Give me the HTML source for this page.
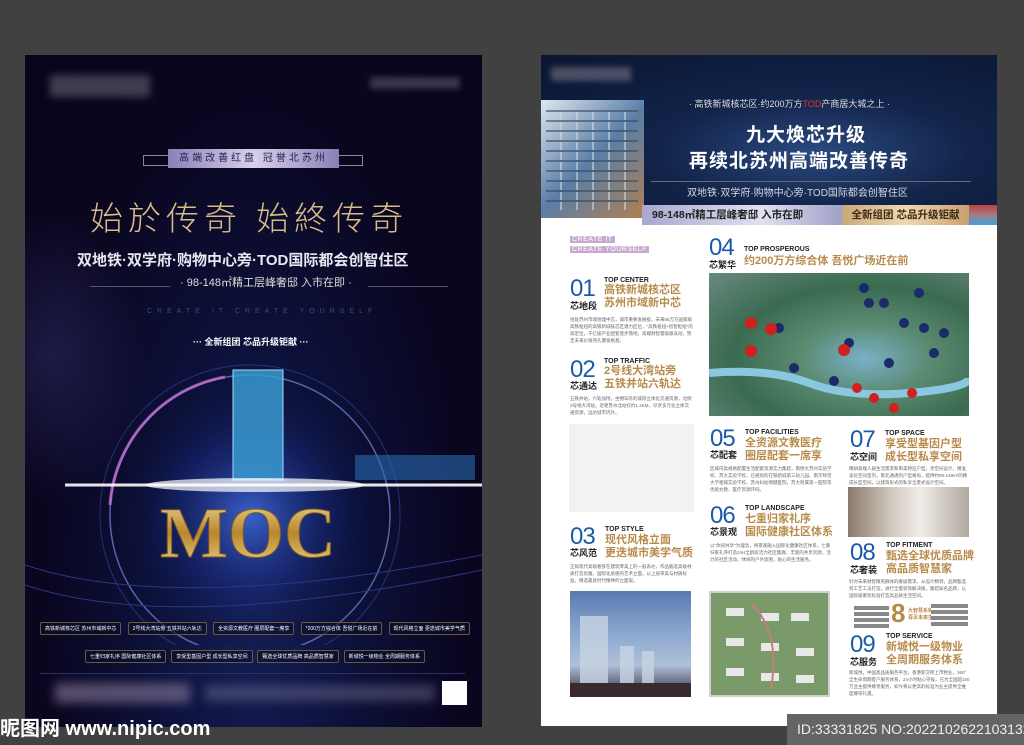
<!DOCTYPE html>
<html><head><meta charset="utf-8"><style>
*{margin:0;padding:0;box-sizing:border-box}
body{width:1024px;height:745px;background:#414141;position:relative;overflow:hidden;font-family:"Liberation Sans","Noto Sans CJK SC",sans-serif}
.a{position:absolute;white-space:nowrap}
.L{left:25px;top:55px;width:457px;height:672px;background:radial-gradient(ellipse at 50% 80%,#16205a 0%,#0c1038 35%,#0a0620 65%,#08041a 100%);overflow:hidden}
.R{left:541px;top:55px;width:456px;height:671px;background:#fff;overflow:hidden}
.gold{color:#c9a66b}
.num{font-family:"Liberation Sans",sans-serif;color:#1a5aa8;font-size:24px;font-weight:300;letter-spacing:-1px;line-height:1}
.lab{font-size:9px;font-weight:bold;color:#222}
.en{font-size:7px;font-weight:bold;color:#222}
.tt{font-size:11px;font-weight:bold;color:#b88a4a;line-height:13px}
.ds{font-size:4.5px;color:#666;line-height:7px;white-space:normal}
.box{border:1px solid #6a5a3a;border-radius:2px;color:#fff;font-size:5px;padding:2px 4px;text-align:center;background:rgba(10,15,40,.6)}
</style></head><body>

<!-- LEFT POSTER -->
<div class="a L">
  <div class="a" style="left:25px;top:20px;width:100px;height:22px;background:#556;filter:blur(4px);opacity:.7"></div>
  <div class="a" style="left:345px;top:22px;width:90px;height:12px;background:#667;filter:blur(3px);opacity:.5"></div>
  <div class="a" style="left:-60px;top:150px;width:180px;height:300px;background:radial-gradient(#2a2a60,transparent 70%);opacity:.6"></div>
  <div class="a" style="left:118px;top:100px;width:220px;height:11px;border:1px solid #888;"></div>
  <div class="a" style="left:143px;top:94px;width:171px;height:19px;background:linear-gradient(90deg,#8a80b8,#d6d0ea 50%,#8a80b8);color:#2a2350;font-size:10px;letter-spacing:3px;text-align:center;line-height:19px">高端改善红盘 冠誉北苏州</div>
  <div class="a gold" style="left:65px;top:137px;font-size:33px;letter-spacing:5px;font-weight:300;color:#d8bc8a">始於传奇 始終传奇</div>
  <div class="a" style="left:52px;top:194px;font-size:15px;color:#e8e8f0;font-weight:bold">双地铁·双学府·购物中心旁·TOD国际都会创智住区</div>
  <div class="a" style="left:65px;top:231px;width:80px;height:1px;background:#556"></div>
  <div class="a" style="left:343px;top:231px;width:80px;height:1px;background:#556"></div>
  <div class="a" style="left:155px;top:219px;font-size:11px;color:#ddd">· 98-148㎡精工层峰奢邸 入市在即 ·</div>
  <div class="a" style="left:122px;top:253px;font-size:7px;letter-spacing:5px;color:#3a4a80">CREATE IT CREATE YOURSELF</div>
  <div class="a" style="left:168px;top:280px;font-size:9px;color:#fff;font-weight:bold">··· 全新组团 芯品升级钜献 ···</div>
  <svg class="a" style="left:0;top:290px" width="457" height="300">
    <defs><radialGradient id="g1" cx="50%" cy="50%"><stop offset="0" stop-color="#4a80ff" stop-opacity=".7"/><stop offset=".5" stop-color="#1a3090" stop-opacity=".35"/><stop offset="1" stop-color="#000" stop-opacity="0"/></radialGradient>
    <linearGradient id="gd" x1="0" y1="0" x2="0" y2="1"><stop offset="0" stop-color="#f4e0a0"/><stop offset=".5" stop-color="#b8862f"/><stop offset="1" stop-color="#f0d890"/></linearGradient></defs>
    <circle cx="225" cy="170" r="150" fill="url(#g1)"/>
    <circle cx="225" cy="170" r="140" fill="none" stroke="#6a7acc" stroke-width="1.5" opacity=".8"/>
    <circle cx="225" cy="170" r="150" fill="none" stroke="#3a4aa0" stroke-width="1" opacity=".6"/>
    <path d="M85 160 A140 140 0 0 1 200 32" fill="none" stroke="#c070d0" stroke-width="3" opacity=".8"/>
    <path d="M0 220 Q150 270 457 210" fill="none" stroke="#2a3a80" stroke-width="1"/>
    <path d="M0 240 Q150 290 457 225" fill="none" stroke="#2a3a80" stroke-width="1"/>
    <rect x="208" y="25" width="50" height="110" fill="#3a9ad0" opacity=".85"/>
    <rect x="208" y="25" width="50" height="110" fill="none" stroke="#9ae0ff" stroke-width="1"/>
    <rect x="330" y="110" width="120" height="25" fill="#2a6ab0" opacity=".6"/>
    <path d="M40 140 L457 140" stroke="#fff" stroke-width="3" opacity=".9"/>
    <ellipse cx="230" cy="140" rx="110" ry="7" fill="#fff" opacity=".7"/>
    <text x="135" y="212" font-family="Liberation Serif,serif" font-size="72" font-weight="bold" fill="url(#gd)" stroke="#7a5a20" stroke-width="1">MOC</text>
  </svg>
  <div class="a" style="left:15px;top:567px;width:430px;display:flex;justify-content:space-between">
    <div class="box">高铁新城核芯区 苏州市域新中芯</div><div class="box">2号线大湾站旁 五铁并站六轨达</div><div class="box">全资源文教医疗 圈层配套一席享</div><div class="box">*200万方综合体 吾悦广场近在前</div><div class="box">现代风格立面 更迭城市美学气质</div>
  </div>
  <div class="a" style="left:60px;top:595px;width:340px;display:flex;justify-content:space-between">
    <div class="box">七重归家礼序 国际健康社区体系</div><div class="box">享受型基因户型 成长型私享空间</div><div class="box">甄选全球优质品牌 高品质智慧家</div><div class="box">新城悦一级物业 全周期服务体系</div>
  </div>
  <div class="a" style="left:15px;top:618px;width:425px;height:1px;background:#2a3060"></div>
  <div class="a" style="left:30px;top:628px;width:135px;height:20px;background:#8a7a9a;filter:blur(5px);opacity:.6"></div>
  <div class="a" style="left:180px;top:630px;width:230px;height:16px;background:#6a6a8a;filter:blur(5px);opacity:.5"></div>
  <div class="a" style="left:417px;top:626px;width:25px;height:24px;background:#fff"></div>
</div>
<div class="a" style="left:0;top:712px;font-size:20px;font-weight:bold;color:#fff">昵图网 www.nipic.com</div>

<!-- RIGHT POSTER -->
<div class="a R">
  <div class="a" style="left:0;top:0;width:456px;height:162px;background:radial-gradient(ellipse at 60% 60%,#2a4a80 0%,#12244a 40%,#0a1530 100%)"></div>
  <div class="a" style="left:10px;top:12px;width:80px;height:14px;background:#667;filter:blur(3px);opacity:.7"></div>
  <div class="a" style="left:0;top:45px;width:103px;height:118px;background:linear-gradient(135deg,#dfe8f0,#5a7ea8 50%,#b08050);"></div>
  <div class="a" style="left:5px;top:55px;width:92px;height:100px;background:repeating-linear-gradient(0deg,transparent 0 8px,#3a4a60 8px 10px),repeating-linear-gradient(90deg,transparent 0 14px,#d0d8e0 14px 16px);opacity:.6"></div>
  <div class="a" style="left:148px;top:42px;font-size:9px;color:#ddd">· 高铁新城核芯区·约200万方<span style="color:#e33">TOD</span>产商居大城之上 ·</div>
  <div class="a" style="left:205px;top:65px;font-size:19px;color:#fff;font-weight:bold;letter-spacing:1px">九大焕芯升级</div>
  <div class="a" style="left:148px;top:91px;font-size:19px;color:#fff;font-weight:bold;letter-spacing:1px">再续北苏州高端改善传奇</div>
  <div class="a" style="left:110px;top:126px;width:320px;height:1px;background:#6a6a6a"></div>
  <div class="a" style="left:146px;top:129px;font-size:10px;color:#d8d8e0">双地铁·双学府·购物中心旁·TOD国际都会创智住区</div>
  <div class="a" style="left:101px;top:150px;width:200px;height:20px;background:linear-gradient(90deg,#a8a8d0,#e0e0f0 60%,#a0a0c8);color:#222;font-size:10.5px;font-weight:bold;line-height:20px;padding-left:10px">98-148㎡精工层峰奢邸 入市在即</div>
  <div class="a" style="left:301px;top:150px;width:127px;height:20px;background:linear-gradient(90deg,#c8a878,#f0d8b0 50%,#c8a070);color:#3a2a10;font-size:10.5px;font-weight:bold;line-height:20px;text-align:center">全新组团 芯品升级钜献</div>
  <div class="a" style="left:428px;top:150px;width:28px;height:20px;background:linear-gradient(180deg,#c04040,#a08080 50%,#40a0e0)"></div>

  <div class="a" style="left:29px;top:181px;background:#c8aad0;color:#fff;font-size:7px;padding:0 2px;letter-spacing:.5px">CREATE IT</div>
  <div class="a" style="left:29px;top:191px;background:#c8aad0;color:#fff;font-size:7px;padding:0 2px;letter-spacing:.5px">CREATE YOURSELF</div>

  <div class="a num" style="left:168px;top:181px">04</div>
  <div class="a lab" style="left:168px;top:203px">芯繁华</div>
  <div class="a en" style="left:203px;top:191px">TOP PROSPEROUS</div>
  <div class="a tt" style="left:203px;top:200px">约200万方综合体 吾悦广场近在前</div>
  <div class="a" style="left:168px;top:218px;width:260px;height:143px;background:radial-gradient(ellipse at 60% 60%,#7ab0c8 0%,#5a8a70 30%,#3a6a50 60%,#6a8a80 100%)"></div>
  <svg class="a" style="left:168px;top:218px" width="260" height="143">
    <path d="M0 100 Q60 95 100 110 T200 120 T260 105" stroke="#8ac8e0" stroke-width="8" fill="none"/>
    <g fill="#1a2a6a"><circle cx="70" cy="55" r="5"/><circle cx="155" cy="15" r="5"/><circle cx="160" cy="30" r="5"/><circle cx="175" cy="30" r="5"/><circle cx="210" cy="20" r="5"/><circle cx="195" cy="50" r="5"/><circle cx="215" cy="55" r="5"/><circle cx="235" cy="60" r="5"/><circle cx="140" cy="70" r="5"/><circle cx="225" cy="80" r="5"/><circle cx="180" cy="90" r="5"/><circle cx="85" cy="95" r="5"/><circle cx="125" cy="108" r="5"/></g>
    <g fill="#d02020"><circle cx="42" cy="50" r="6"/><circle cx="62" cy="56" r="6"/><circle cx="42" cy="78" r="6"/><circle cx="135" cy="77" r="6"/><circle cx="148" cy="115" r="5"/><circle cx="165" cy="125" r="5"/><circle cx="185" cy="135" r="5"/><circle cx="203" cy="120" r="5"/></g>
  </svg>

  <div class="a num" style="left:29px;top:222px">01</div>
  <div class="a lab" style="left:29px;top:244px">芯地段</div>
  <div class="a en" style="left:63px;top:222px">TOP CENTER</div>
  <div class="a tt" style="left:63px;top:229px">高铁新城核芯区<br>苏州市域新中芯</div>
  <div class="a ds" style="left:29px;top:261px;width:123px">地处苏州市域地理中芯，城市重要发展极，未来55万方国家级高铁枢纽的高铁新城核芯区潜力区位，"高铁枢纽+创智枢纽"的高定位，千亿级产业配套逐步落地，高端财智量级跟迭动，赞定未来价值持久爆发根基。</div>
  <div class="a num" style="left:29px;top:303px">02</div>
  <div class="a lab" style="left:29px;top:324px">芯通达</div>
  <div class="a en" style="left:63px;top:303px">TOP TRAFFIC</div>
  <div class="a tt" style="left:63px;top:310px">2号线大湾站旁<br>五铁并站六轨达</div>
  <div class="a ds" style="left:29px;top:340px;width:123px">五铁并站，六轨加持，坐拥罕有的城际立体化交通资源，北侧2号线大湾站，近距苏州北站仅约1.2KM，尽享多元化立体交通资源，远达城市内外。</div>
  <div class="a" style="left:28px;top:369px;width:125px;height:88px;background:#f2f2f2"></div>

  <div class="a num" style="left:169px;top:372px">05</div>
  <div class="a lab" style="left:169px;top:393px">芯配套</div>
  <div class="a en" style="left:204px;top:374px">TOP FACILITIES</div>
  <div class="a tt" style="left:204px;top:382px">全资源文教医疗<br>圈层配套一席享</div>
  <div class="a ds" style="left:169px;top:410px;width:122px">区域内高规格配置生活配套资源实力集结，南侧大苏州实验学校、苏大实验学校、已规划的在铁新城第三幼儿园、南京师范大学相城实验学校，苏州妇幼保健医院，苏大附属第一医院等优质文教、医疗资源环伺。</div>
  <div class="a num" style="left:169px;top:449px">06</div>
  <div class="a lab" style="left:169px;top:470px">芯景观</div>
  <div class="a en" style="left:204px;top:450px">TOP LANDSCAPE</div>
  <div class="a tt" style="left:204px;top:458px">七重归家礼序<br>国际健康社区体系</div>
  <div class="a ds" style="left:169px;top:487px;width:122px">以"你同共享"为理念，将景观融入国际化健康社区体系，七重归家礼序打造24H全龄段活力社区集群，丰富的共享资源，活力的社区活动，休闲的户外氛围，贴心的生活服务。</div>

  <div class="a num" style="left:309px;top:373px">07</div>
  <div class="a lab" style="left:309px;top:395px">芯空间</div>
  <div class="a en" style="left:344px;top:375px">TOP SPACE</div>
  <div class="a tt" style="left:344px;top:383px">享受型基因户型<br>成长型私享空间</div>
  <div class="a ds" style="left:308px;top:410px;width:121px">精研高端人居生活需求和审美特征户型，享空间设计，精准美化空间室内，南北通透的户型格局，提供约98-148m²的精成长型空间，以建筑形式的私享全景式设计空间。</div>
  <div class="a" style="left:307px;top:432px;width:121px;height:50px;background:linear-gradient(90deg,#8a7a6a,#d8d0c8 40%,#f0ece8 60%,#b0a8a0)"></div>

  <div class="a num" style="left:29px;top:470px">03</div>
  <div class="a lab" style="left:29px;top:491px">芯风范</div>
  <div class="a en" style="left:64px;top:471px">TOP STYLE</div>
  <div class="a tt" style="left:64px;top:479px">现代风格立面<br>更迭城市美学气质</div>
  <div class="a ds" style="left:29px;top:508px;width:123px">正如现代高级奢侈在建筑零美上的一般表达，作品甄选高级材质打造优雅，国际化质感的艺术立面，以上层审美与材质标准，精选最具时代精神的立面观。</div>

  <div class="a num" style="left:309px;top:486px">08</div>
  <div class="a lab" style="left:309px;top:508px">芯奢装</div>
  <div class="a en" style="left:345px;top:487px">TOP FITMENT</div>
  <div class="a tt" style="left:345px;top:495px">甄选全球优质品牌<br>高品质智慧家</div>
  <div class="a ds" style="left:308px;top:523px;width:121px">针对未来财智精英群体的奢居需求，从设计精到，品牌甄选到工艺工法打造，进行全量装饰解决版，集结知名品牌，以国际级奢装标准打造高品质生活空间。</div>
  <div class="a" style="left:313px;top:551px;width:35px;height:22px;background:repeating-linear-gradient(180deg,#888 0 4px,#fff 4px 6px)"></div>
  <div class="a" style="left:350px;top:543px;font-size:26px;font-weight:bold;color:#b88a4a;line-height:30px">8</div>
  <div class="a" style="left:367px;top:552px;font-size:5px;color:#b88a4a;font-weight:bold">大智慧系统<br>尊享未来生活</div>
  <div class="a" style="left:390px;top:549px;width:37px;height:23px;background:repeating-linear-gradient(180deg,#888 0 4px,#fff 4px 6px)"></div>

  <div class="a num" style="left:309px;top:578px">09</div>
  <div class="a lab" style="left:309px;top:600px">芯服务</div>
  <div class="a en" style="left:345px;top:578px">TOP SERVICE</div>
  <div class="a tt" style="left:345px;top:586px">新城悦一级物业<br>全周期服务体系</div>
  <div class="a ds" style="left:308px;top:614px;width:121px">新城悦，中国高品质服务平台，香港新交所上市物业，360°全生命周期客户服务体系，24小时贴心守候，已为全国超100万业主提供尊贵服务，如今将以更高的标准为业主提供全维度尊崇礼遇。</div>

  <div class="a" style="left:29px;top:536px;width:121px;height:106px;background:linear-gradient(180deg,#5a7ab0 0%,#8aa8d0 40%,#b0c0d8 70%,#2a2a3a 100%)"></div>
  <svg class="a" style="left:29px;top:536px" width="121" height="106"><g fill="#c8d4e4" opacity=".8"><rect x="10" y="25" width="28" height="70"/><rect x="50" y="55" width="14" height="40"/><rect x="72" y="60" width="12" height="35"/></g><rect x="0" y="92" width="121" height="14" fill="#3a2a30"/></svg>
  <div class="a" style="left:168px;top:536px;width:121px;height:106px;background:#7a9a6a;border:2px solid #d0d0d0"></div>
  <svg class="a" style="left:170px;top:538px" width="117" height="102"><g fill="#e8e8e8"><rect x="15" y="15" width="18" height="8"/><rect x="50" y="20" width="18" height="8"/><rect x="80" y="20" width="18" height="8"/><rect x="15" y="45" width="18" height="8"/><rect x="50" y="50" width="18" height="8"/><rect x="85" y="55" width="18" height="8"/><rect x="15" y="75" width="18" height="8"/><rect x="50" y="80" width="18" height="8"/><rect x="85" y="82" width="18" height="8"/></g><path d="M40 10 Q70 40 60 95" stroke="#c08080" stroke-width="2" fill="none"/></svg>
</div>
<div class="a" style="left:787px;top:714px;width:237px;height:31px;background:#646464;color:#eee;font-size:14px;line-height:31px;padding-left:10px">ID:33331825 NO:20221026221031328107</div>
</body></html>
